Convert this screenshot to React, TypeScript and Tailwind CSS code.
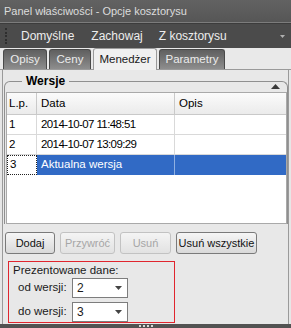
import { ReactNode } from "react";

const font = "font-['Liberation_Sans',Arial,sans-serif]";

function Tab({ label, width, active }: { label: string; width: string; active?: boolean }) {
  if (active) {
    return (
      <div
        className={`${width} h-[22px] -mb-px flex items-center justify-center rounded-t-[3px] border border-b-0 border-[#9a9a9a] bg-[#f0f0f0] text-[11.5px] text-[#1a1a1a]`}
      >
        {label}
      </div>
    );
  }
  return (
    <div
      className={`${width} h-[20px] flex items-center justify-center rounded-t-[3px] border border-b-0 border-[#4a4a4a] bg-gradient-to-b from-[#5f5f5f] to-[#8e8e8e] text-[11.5px] text-[#ececec]`}
    >
      {label}
    </div>
  );
}

function Button({ children, width, disabled }: { children: ReactNode; width: string; disabled?: boolean }) {
  return (
    <div
      className={`${width} h-[22px] flex items-center justify-center rounded-[3px] border bg-gradient-to-b text-[11px] ${
        disabled
          ? "border-[#c2c2c2] from-[#f4f4f4] to-[#e2e2e2] text-[#a6a6a6]"
          : "border-[#7a7a7a] from-[#f6f6f6] to-[#d9d9d9] text-[#111]"
      }`}
    >
      {children}
    </div>
  );
}

function Select({ value }: { value: string }) {
  return (
    <div className="w-[56px] h-[20px] flex items-center justify-between border border-[#7d7d7d] bg-white pl-[4px] pr-[5px] text-[12px]">
      <span>{value}</span>
      <svg width="7" height="4" viewBox="0 0 7 4">
        <path d="M0 0h7L3.5 4z" fill="#444" />
      </svg>
    </div>
  );
}

const rows = [
  { lp: "1", data: "2014-10-07 11:48:51" },
  { lp: "2", data: "2014-10-07 13:09:29" },
];

export default function App() {
  return (
    <div className={`${font} w-[291px] h-[328px] overflow-hidden flex flex-col bg-[#e6e6e6] text-[11px] text-black`}>
      {/* title bar */}
      <div className="h-[22px] shrink-0 flex items-center pl-[4px] bg-gradient-to-b from-[#626262] to-[#565656] text-[11px] text-[#dcdcdc]">
        Panel właściwości - Opcje kosztorysu
      </div>
      <div className="h-px shrink-0 bg-[#7c7c7c]" />
      <div className="h-px shrink-0 bg-[#3c3c3c]" />

      {/* toolbar */}
      <div className="h-[24px] shrink-0 flex items-center bg-[#4b4b4b] text-[12px] text-[#ededed]">
        <div className="ml-[5px] h-[16px] flex flex-col justify-between">
          {[0, 1, 2, 3, 4].map((i) => (
            <div key={i} className="w-[2px] h-[2px] bg-[#2e2e2e]" />
          ))}
        </div>
        <span className="ml-[14px]">Domyślne</span>
        <span className="ml-[17px]">Zachowaj</span>
        <span className="ml-[16px]">Z kosztorysu</span>
        <svg className="ml-auto mr-[6px]" width="5" height="3" viewBox="0 0 5 3">
          <path d="M0 0h5L2.5 3z" fill="#b0b0b0" />
        </svg>
      </div>

      {/* tabs */}
      <div className="h-[22px] shrink-0 flex items-end gap-[2px] pl-[3px] border-b border-[#9a9a9a] bg-[#e9e9e9]">
        <Tab label="Opisy" width="w-[44px]" />
        <Tab label="Ceny" width="w-[42px]" />
        <Tab label="Menedżer" width="w-[64px]" active />
        <Tab label="Parametry" width="w-[66px]" />
      </div>

      {/* panel */}
      <div className="flex-1 flex flex-col ml-[2px] mr-[2px] border-x border-[#9a9a9a] bg-[#e8e8e8] pt-[4px]">
        <fieldset className="relative ml-px mr-0 border-t border-l border-r border-[#8f8f8f] rounded-t-[6px]">
          <legend className="ml-[17px] px-[4px] text-[12px] font-bold leading-[14px]">Wersje</legend>
          <svg className="absolute right-[7px] -top-[4px]" width="9" height="5" viewBox="0 0 9 5">
            <path d="M0 5h9L4.5 0z" fill="#3a3a3a" />
          </svg>

          <div className="mt-[4px] ml-px mr-0 h-[132px] border border-[#a9a9a9] bg-white text-[11.5px]">
            <div className="grid grid-cols-[30px_138px_1fr] h-[22px] border-b border-[#c9c9c9] bg-gradient-to-b from-[#fbfbfb] to-[#ebebeb]">
              <div className="flex items-center pl-[2px] border-r border-[#c9c9c9]">L.p.</div>
              <div className="flex items-center pl-[4px] border-r border-[#c9c9c9]">Data</div>
              <div className="flex items-center pl-[4px]">Opis</div>
            </div>
            {rows.map((r) => (
              <div key={r.lp} className="grid grid-cols-[30px_138px_1fr] h-[20px] border-b border-[#d9d9d9]">
                <div className="flex items-center pl-[2px] border-r border-[#d9d9d9]">{r.lp}</div>
                <div className="flex items-center pl-[4px] border-r border-[#d9d9d9] tracking-[-0.6px]">{r.data}</div>
                <div />
              </div>
            ))}
            <div className="grid grid-cols-[30px_138px_1fr] h-[20px]">
              <div className="flex items-center pl-[2px] border border-dotted border-[#222]">3</div>
              <div className="flex items-center pl-[4px] bg-[#316ac5] text-white border-r border-[#8fb0e2]">
                Aktualna wersja
              </div>
              <div className="bg-[#316ac5]" />
            </div>
          </div>
        </fieldset>

        {/* buttons */}
        <div className="mt-[8px] ml-[2px] flex gap-[5px]">
          <Button width="w-[50px]">Dodaj</Button>
          <Button width="w-[55px]" disabled>
            Przywróć
          </Button>
          <Button width="w-[51px]" disabled>
            Usuń
          </Button>
          <Button width="w-[81px]">Usuń wszystkie</Button>
        </div>

        {/* presented data */}
        <div className="mt-[7px] ml-[5px] w-[167px] h-[62px] border border-[#e0252e] pl-[4px] pt-[1px] text-[11.5px] text-[#1a1a1a]">
          <div className="leading-[14px]">Prezentowane dane:</div>
          <div className="mt-[1px] flex items-center">
            <span className="ml-[5px] w-[54px]">od wersji:</span>
            <Select value="2" />
          </div>
          <div className="mt-[4px] flex items-center">
            <span className="ml-[5px] w-[54px]">do wersji:</span>
            <Select value="3" />
          </div>
        </div>
      </div>

      {/* bottom bar */}
      <div className="h-[4px] shrink-0 flex justify-center gap-[2px] bg-[#525252]">
        {[0, 1, 2, 3].map((i) => (
          <div key={i} className="w-[2px] h-[2px] mt-[1px] bg-[#d8d8d8]" />
        ))}
      </div>
    </div>
  );
}
